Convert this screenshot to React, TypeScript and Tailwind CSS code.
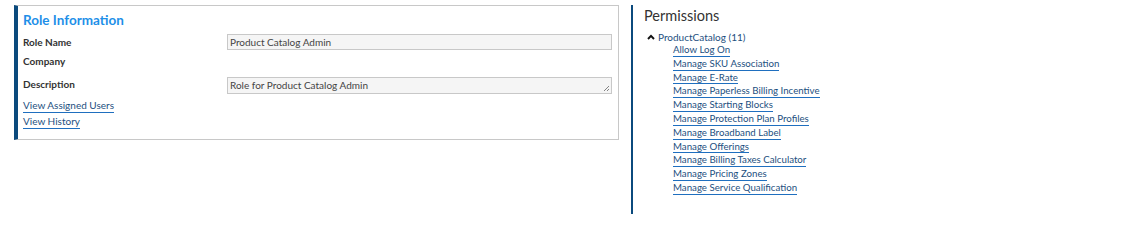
import React from "react";

const perms = [
  "Allow Log On",
  "Manage SKU Association",
  "Manage E-Rate",
  "Manage Paperless Billing Incentive",
  "Manage Starting Blocks",
  "Manage Protection Plan Profiles",
  "Manage Broadband Label",
  "Manage Offerings",
  "Manage Billing Taxes Calculator",
  "Manage Pricing Zones",
  "Manage Service Qualification",
];

export default function App() {
  return (
    <div className="w-[1129px] h-[228px] bg-white text-[#333] text-[10px] font-['Lato',sans-serif] flex">
      <div className="w-[631px] shrink-0 pt-[5px] pl-[14px] pr-[12px]">
        <div className="border-l-[4px] border-l-[#0b4a7d] border-t border-r border-b border-[#c8c8c8] h-[135px] pl-[5px] pr-[6px] pt-[5px]">
          <div className="text-[13.5px] font-bold text-[#1e8fe8] leading-[18px]">Role Information</div>
          <div className="mt-[11px] flex items-start h-[16px]">
            <div className="w-[204px] font-bold leading-[14px] -mt-[5px]">Role Name</div>
            <div className="flex-1 h-[16px] -mt-[6px] border border-[#c8c8c8] bg-[#f5f5f5] px-[2px] leading-[14px] text-[#444]">Product Catalog Admin</div>
          </div>
          <div className="h-[21px] font-bold leading-[14px] -mt-[2px]">Company</div>
          <div className="flex items-start h-[20px] mt-[3px]">
            <div className="w-[204px] font-bold leading-[14px] -mt-[1px]">Description</div>
            <div className="flex-1 h-[17px] -mt-[1px] border border-[#c8c8c8] bg-[#f5f5f5] px-[2px] leading-[15px] text-[#444] relative">
              Role for Product Catalog Admin
              <svg className="absolute right-[1px] bottom-[1px]" width="7" height="7" viewBox="0 0 7 7">
                <path d="M6 1 L1 6 M6 4 L4 6" stroke="#666" strokeWidth="0.8" />
              </svg>
            </div>
          </div>
          <div className="flex flex-col items-start mt-[1px]">
            <a className="leading-[13px] text-[#1d4f80] border-b border-[#1f6fbf] cursor-pointer">View Assigned Users</a>
            <a className="mt-[2px] leading-[13px] text-[#1d4f80] border-b border-[#1f6fbf] cursor-pointer">View History</a>
          </div>
        </div>
      </div>
      <div className="w-[2px] bg-[#0b4a7d] mt-[5px] h-[209px] shrink-0" />
      <div className="pl-[11px] pt-[6px]">
        <div className="text-[14.5px] text-[#333] leading-[20px]">Permissions</div>
        <div className="mt-[4px] flex items-center h-[14px] pl-[3px]">
          <svg width="8" height="6" viewBox="0 0 8 6" className="mr-[3px]">
            <path d="M1 5 L4 1.8 L7 5" stroke="#111" strokeWidth="1.9" fill="none" />
          </svg>
          <span className="text-[#1d4f80]">ProductCatalog (11)</span>
        </div>
        <div className="flex flex-col items-start pl-[29px] -mt-[1px] text-[9.7px]">
          {perms.map((p) => (
            <a key={p} className="leading-[12px] h-[13.8px] text-[#1d4f80] border-b border-[#1f6fbf] cursor-pointer">{p}</a>
          ))}
        </div>
      </div>
    </div>
  );
}
